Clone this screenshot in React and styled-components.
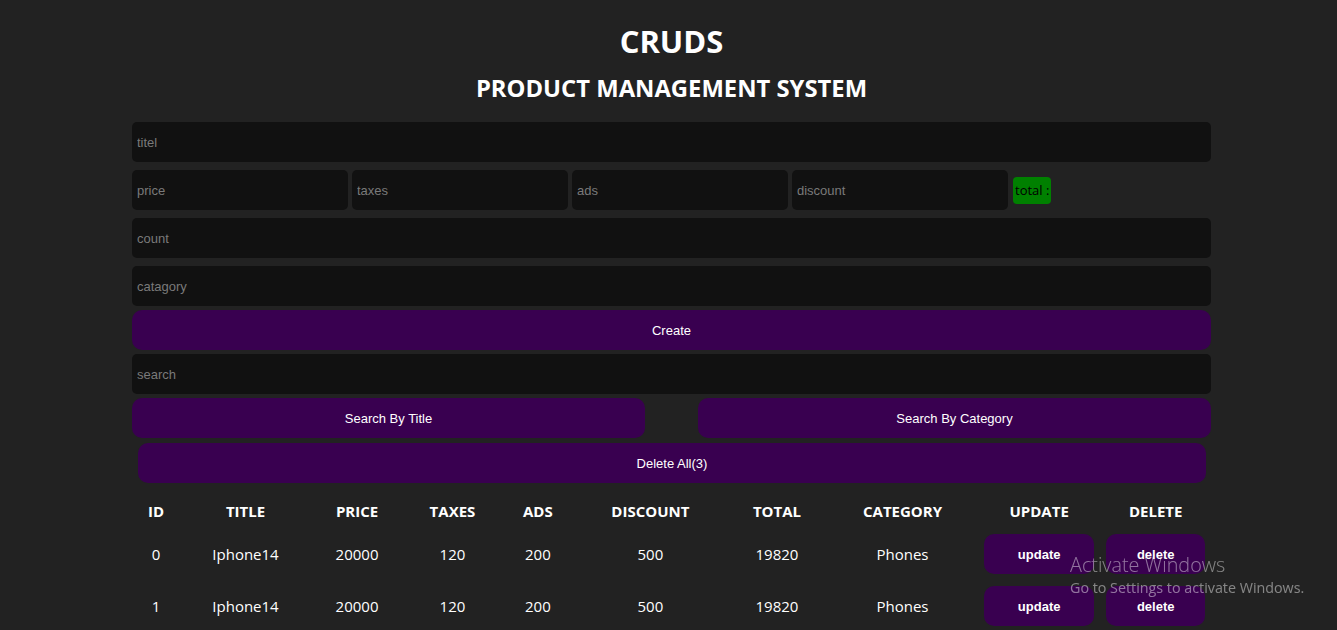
import React, { useState } from "react";
import styled, { createGlobalStyle } from "styled-components";

const GlobalStyle = createGlobalStyle`
  * {
    box-sizing: border-box;
  }
  body {
    margin: 0;
    background: #222222;
    color: #ffffff;
    font-family: "Open Sans", "Noto Sans", sans-serif;
    overflow: hidden;
  }
`;

const Crud = styled.div`
  width: 1079px;
  margin: 0 0 0 132px;
`;

const Head = styled.div`
  text-align: center;
  text-transform: uppercase;
  padding-top: 22px;
`;

const MainTitle = styled.h1`
  margin: 0;
  font-size: 31px;
  line-height: 38px;
  font-weight: 700;
`;

const SubTitle = styled.h2`
  margin: 13px 0 0;
  font-size: 23.8px;
  line-height: 30px;
  font-weight: 700;
`;

const Inputs = styled.div`
  display: flex;
  flex-direction: column;
  margin-top: 19px;
`;

const Field = styled.input`
  width: 100%;
  height: 40px;
  border: none;
  outline: none;
  background: #111111;
  border-radius: 5px;
  padding: 0 5px;
  color: #ffffff;
  font-family: "Liberation Sans", Arial, sans-serif;
  font-size: 13px;
  margin-bottom: ${(p) => p.$gap ?? 8}px;

  &::placeholder {
    color: #7a7a7a;
  }
`;

const PriceRow = styled.div`
  display: flex;
  align-items: center;
  gap: 4px;
  margin-bottom: 8px;

  & > input {
    width: 216px;
    margin-bottom: 0;
  }
`;

const Total = styled.span`
  margin-left: 1px;
  background: #008000;
  color: #000000;
  border-radius: 4px;
  height: 27px;
  padding: 0 2px;
  display: flex;
  align-items: center;
  font-size: 13px;
`;

const Button = styled.button`
  width: ${(p) => p.$width || "100%"};
  height: 40px;
  border: none;
  cursor: pointer;
  background: #390050;
  color: #ffffff;
  border-radius: 10px;
  font-family: "Liberation Sans", Arial, sans-serif;
  font-size: 13px;
  margin-bottom: ${(p) => p.$gap ?? 4}px;
`;

const SearchRow = styled.div`
  display: flex;
  justify-content: space-between;
  margin-bottom: 5px;

  & > button {
    margin-bottom: 0;
  }
`;

const DeleteAllWrap = styled.div`
  padding: 0 5px 0 6px;
`;

const Table = styled.table`
  width: 100%;
  border-collapse: collapse;
  table-layout: fixed;
  margin-top: 10px;
  text-align: center;
`;

const Th = styled.th`
  height: 35px;
  font-size: 15px;
  font-weight: 700;
  text-transform: uppercase;
  padding: 0;
`;

const Td = styled.td`
  height: 52px;
  font-size: 15px;
  padding: 0 6px;
`;

const RowButton = styled.button`
  width: 100%;
  height: 40px;
  border: none;
  cursor: pointer;
  background: #390050;
  color: #ffffff;
  border-radius: 10px;
  font-family: "Liberation Sans", Arial, sans-serif;
  font-size: 13px;
  font-weight: 700;
`;

const Watermark = styled.div`
  position: fixed;
  left: 1070px;
  top: 552px;
  color: rgba(255, 255, 255, 0.45);
  font-family: "Open Sans", "Noto Sans", sans-serif;
  pointer-events: none;
`;

const WatermarkTitle = styled.div`
  font-size: 19.8px;
  font-weight: 300;
  line-height: 25px;
`;

const WatermarkText = styled.div`
  font-size: 14.3px;
  line-height: 20px;
  margin-top: 1px;
`;

const columns = [
  { key: "id", label: "id", width: 48 },
  { key: "title", label: "title", width: 130 },
  { key: "price", label: "price", width: 92 },
  { key: "taxes", label: "taxes", width: 98 },
  { key: "ads", label: "ads", width: 72 },
  { key: "discount", label: "discount", width: 152 },
  { key: "total", label: "total", width: 100 },
  { key: "category", label: "category", width: 150 },
  { key: "update", label: "update", width: 122 },
  { key: "delete", label: "delete", width: 110 },
];

const App = () => {
  const [products] = useState([
    { title: "Iphone14", price: 20000, taxes: 120, ads: 200, discount: 500, total: 19820, category: "Phones" },
    { title: "Iphone14", price: 20000, taxes: 120, ads: 200, discount: 500, total: 19820, category: "Phones" },
    { title: "Iphone14", price: 20000, taxes: 120, ads: 200, discount: 500, total: 19820, category: "Phones" },
  ]);

  return (
    <>
      <GlobalStyle />
      <Crud>
        <Head>
          <MainTitle>cruds</MainTitle>
          <SubTitle>product management system</SubTitle>
        </Head>
        <Inputs>
          <Field type="text" placeholder="titel" />
          <PriceRow>
            <Field type="number" placeholder="price" />
            <Field type="number" placeholder="taxes" />
            <Field type="number" placeholder="ads" />
            <Field type="number" placeholder="discount" />
            <Total>total :</Total>
          </PriceRow>
          <Field type="number" placeholder="count" />
          <Field type="text" placeholder="catagory" $gap={4} />
          <Button>Create</Button>
          <Field type="text" placeholder="search" $gap={4} />
          <SearchRow>
            <Button $width="513px">Search By Title</Button>
            <Button $width="513px">Search By Category</Button>
          </SearchRow>
          <DeleteAllWrap>
            <Button $gap={0}>Delete All({products.length})</Button>
          </DeleteAllWrap>
        </Inputs>
        <Table>
          <colgroup>
            {columns.map((c) => (
              <col key={c.key} style={{ width: c.width }} />
            ))}
          </colgroup>
          <thead>
            <tr>
              {columns.map((c) => (
                <Th key={c.key}>{c.label}</Th>
              ))}
            </tr>
          </thead>
          <tbody>
            {products.map((p, i) => (
              <tr key={i}>
                <Td>{i}</Td>
                <Td>{p.title}</Td>
                <Td>{p.price}</Td>
                <Td>{p.taxes}</Td>
                <Td>{p.ads}</Td>
                <Td>{p.discount}</Td>
                <Td>{p.total}</Td>
                <Td>{p.category}</Td>
                <Td>
                  <RowButton>update</RowButton>
                </Td>
                <Td>
                  <RowButton>delete</RowButton>
                </Td>
              </tr>
            ))}
          </tbody>
        </Table>
      </Crud>
      <Watermark>
        <WatermarkTitle>Activate Windows</WatermarkTitle>
        <WatermarkText>Go to Settings to activate Windows.</WatermarkText>
      </Watermark>
    </>
  );
};

export default App;
